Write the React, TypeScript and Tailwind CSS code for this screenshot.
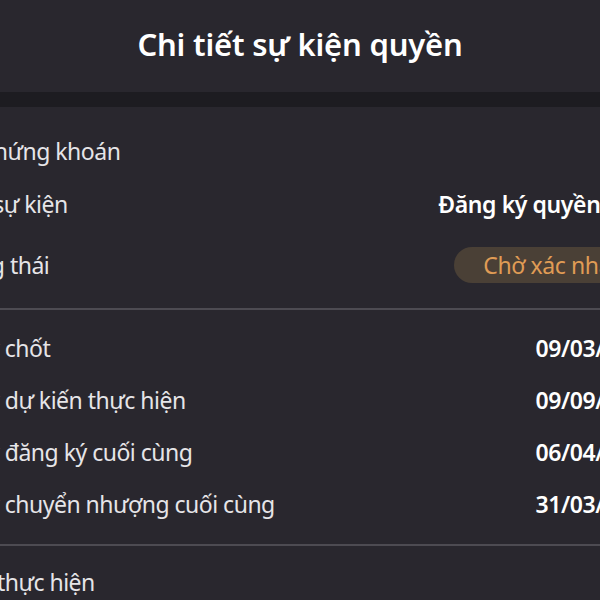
import React from "react";

const Row = ({ label, value, h = "h-[52px]" }: { label: string; value?: React.ReactNode; h?: string }) => (
  <div className={`flex items-center justify-between ${h}`}>
    <span className="text-[23px] tracking-[-0.5px] text-[#e6e5e8] whitespace-nowrap">{label}</span>
    {value}
  </div>
);

const Val = ({ children }: { children: React.ReactNode }) => (
  <span className="text-[23px] tracking-[-0.4px] font-semibold text-white whitespace-nowrap">{children}</span>
);

export default function App() {
  return (
    <div className="w-[600px] h-[600px] overflow-hidden bg-[#29272e]" style={{ fontFamily: '"Noto Sans", sans-serif' }}>
      <div className="h-[92px] flex items-center justify-center pb-[3px]">
        <h1 className="text-[31px] tracking-[-0.2px] font-semibold text-white">Chi tiết sự kiện quyền</h1>
      </div>
      <div className="h-[15px] bg-[#1d1c21]" />
      <div className="w-[710px] -ml-[55px]">
        <div className="pt-[18px] pb-[9px]">
          <Row label="Mã chứng khoán" h="h-[53px]" />
          <Row label="Loại sự kiện" h="h-[53px]" value={<Val>Đăng ký quyền mua</Val>} />
          <Row
            label="Trạng thái"
            h="h-[68px]"
            value={
              <span className="h-[36px] pl-[29px] pr-[30px] rounded-full bg-[#4a4036] text-[#e09c55] text-[23px] tracking-[-0.4px] flex items-center whitespace-nowrap">
                Chờ xác nhận
              </span>
            }
          />
        </div>
        <div className="h-[2px] bg-[#4d4b52]" />
        <div className="pt-[12px] pb-[14px]">
          <Row label="Ngày chốt" value={<Val>09/03/2022</Val>} />
          <Row label="Ngày dự kiến thực hiện" value={<Val>09/09/2022</Val>} />
          <Row label="Ngày đăng ký cuối cùng" value={<Val>06/04/2022</Val>} />
          <Row label="Ngày chuyển nhượng cuối cùng" value={<Val>31/03/2022</Val>} />
        </div>
        <div className="h-[2px] bg-[#4d4b52]" />
        <div className="pt-[10px]">
          <Row label="Tỷ lệ thực hiện" />
        </div>
      </div>
    </div>
  );
}
